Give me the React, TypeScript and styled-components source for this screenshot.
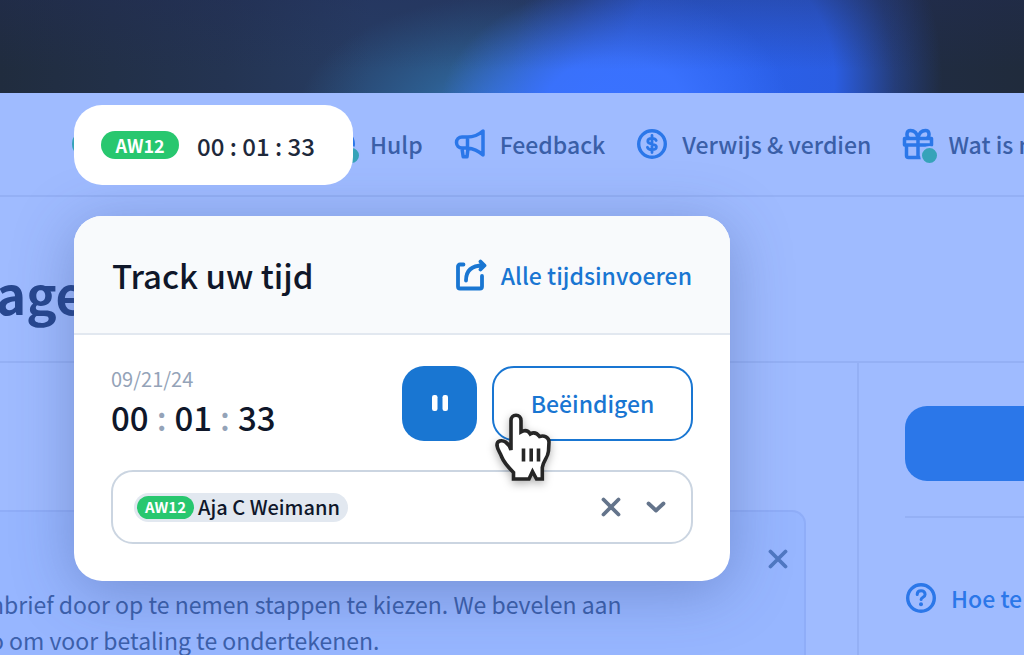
import React from "react";
import styled, { createGlobalStyle, css } from "styled-components";

const GlobalStyle = createGlobalStyle`
  *, *::before, *::after { box-sizing: border-box; }
  body {
    margin: 0;
    background: #9fbbff;
    font-family: "Noto Sans CJK SC", "Noto Sans", sans-serif;
    overflow: hidden;
  }
  h1, h2, p { margin: 0; }
  button { font: inherit; cursor: pointer; padding: 0; }
  svg { display: block; flex: none; }
`;

const line = "#94b0f5";
const accent = "#2b77e9";
const primary = "#1976d2";

const Page = styled.div`
  position: relative;
  display: flex;
  flex-direction: column;
  min-height: 100vh;
  overflow: hidden;
`;

const Banner = styled.div`
  height: 93px;
  background:
    linear-gradient(180deg, rgba(34, 44, 90, 0.32) 0%, rgba(34, 44, 90, 0) 75%),
    radial-gradient(ellipse 17% 130% at 60% 115%, #3a72ff 0%, rgba(58, 114, 255, 0.95) 40%, rgba(56, 108, 240, 0) 100%),
    radial-gradient(ellipse 21% 260% at 71% 85%, #2a60ea 0%, rgba(43, 95, 232, 0.96) 50%, rgba(42, 84, 200, 0.4) 78%, rgba(36, 60, 120, 0) 100%),
    radial-gradient(ellipse 21% 130% at 50% 125%, rgba(56, 130, 210, 0.85) 0%, rgba(50, 120, 180, 0.55) 45%, rgba(50, 110, 170, 0) 100%),
    linear-gradient(90deg, #202c3e 0%, #243452 22%, #273d64 36%, #273d64 60%, #202c42 90%, #202b3c 100%);
`;

const Nav = styled.nav`
  display: flex;
  align-items: center;
  height: 104px;
  padding-left: 72px;
  border-bottom: 2px solid ${line};
  white-space: nowrap;
`;

const NavBadge = styled.span`
  width: 78px;
  height: 28px;
  margin-right: 174px;
  border-radius: 14px;
  background: #36a3b9;
  flex: none;
`;

const NavLinks = styled.div`
  display: flex;
  gap: 31px;
`;

const NavLink = styled.a`
  display: flex;
  align-items: center;
  gap: 14px;
  color: #3a5fa8;
  font-size: 23px;
  font-weight: 500;
  line-height: 32px;
  text-decoration: none;
`;

const IconSlot = styled.span`
  position: relative;
  width: 32px;
  display: flex;
  justify-content: center;
  color: ${accent};
`;

const Dot = styled.span`
  position: absolute;
  right: -5px;
  bottom: -5px;
  width: 19px;
  height: 19px;
  border: 2px solid #9fbbff;
  border-radius: 50%;
  background: #36a3b9;
`;

const PageHeader = styled.header`
  display: flex;
  align-items: center;
  height: 166px;
  padding-top: 28px;
  border-bottom: 2px solid ${line};
`;

const PageTitle = styled.h1`
  margin-left: -4px;
  color: #27478f;
  font-size: 51px;
  font-weight: 700;
  line-height: 64px;
`;

const Columns = styled.div`
  flex: 1;
  display: flex;
`;

const Main = styled.main`
  flex: 1;
  min-width: 0;
  padding: 147px 51px 0 0;
`;

const Notice = styled.section`
  position: relative;
  height: 100%;
  padding-top: 74px;
  border: 2px solid #8fadf8;
  border-left: 0;
  border-bottom: 0;
  border-radius: 0 14px 0 0;
  background: #97b6ff;
  white-space: nowrap;
`;

const NoticeText = styled.p`
  margin-left: -10px;
  color: #3c60ab;
  font-size: 23px;
  line-height: 36px;
`;

const IconButton = styled.button<{ $color: string }>`
  display: grid;
  place-items: center;
  width: 28px;
  height: 28px;
  border: 0;
  background: none;
  color: ${(p) => p.$color};
`;

const NoticeClose = styled.div`
  position: absolute;
  top: 33px;
  right: 12px;
`;

const Aside = styled.aside`
  width: 167px;
  padding: 43px 0 0 46px;
  border-left: 2px solid ${line};
  flex: none;
  overflow: hidden;
`;

const AsideButton = styled.button`
  display: block;
  width: 100%;
  height: 75px;
  border: 0;
  border-radius: 22px 0 0 22px;
  background: ${accent};
`;

const AsideLinks = styled.div`
  margin-top: 35px;
  padding-top: 64px;
  border-top: 2px solid ${line};
`;

const AsideLink = styled(NavLink)`
  color: ${accent};
  white-space: nowrap;
`;

const Overlay = styled.div`
  position: absolute;
  top: 105px;
  left: 74px;
  width: 656px;
`;

const card = css`
  background: #fff;
  box-shadow: 0 10px 60px rgba(50, 70, 130, 0.35);
`;

const TimerPill = styled.button`
  position: relative;
  display: flex;
  align-items: center;
  gap: 18px;
  width: 279px;
  height: 80px;
  padding-left: 27px;
  border: 0;
  border-radius: 28px;
  background: #fff;
  color: #1e293b;
  font-size: 24px;
  font-weight: 500;
  white-space: pre;
`;

const Badge = styled.span<{ $small?: boolean }>`
  display: grid;
  place-items: center;
  width: ${(p) => (p.$small ? 57 : 78)}px;
  height: ${(p) => (p.$small ? 23 : 28)}px;
  border-radius: 14px;
  background: #28c76f;
  color: #fff;
  font-size: ${(p) => (p.$small ? 15 : 18)}px;
  font-weight: 700;
  line-height: 20px;
`;

const Popover = styled.section`
  ${card}
  margin-top: 31px;
  border-radius: 28px;
`;

const PopoverHeader = styled.header`
  display: flex;
  align-items: center;
  justify-content: space-between;
  height: 119px;
  padding: 0 38px;
  border-bottom: 2px solid #e2e8f0;
  border-radius: 28px 28px 0 0;
  background: #f8fafc;
`;

const PopoverTitle = styled.h2`
  color: #0f172a;
  font-size: 33px;
  font-weight: 500;
  line-height: 48px;
`;

const EntriesLink = styled(NavLink)`
  color: ${primary};
`;

const PopoverBody = styled.div`
  padding: 30px 37px 37px;
`;

const TimerRow = styled.div`
  display: flex;
  align-items: center;
  gap: 15px;
`;

const TimerInfo = styled.div`
  flex: 1;
`;

const DateText = styled.div`
  color: #94a3b8;
  font-size: 20px;
  line-height: 28px;
`;

const Elapsed = styled.div`
  display: flex;
  gap: 8px;
  color: #0f172a;
  font-size: 33px;
  font-weight: 500;
  line-height: 48px;
`;

const Colon = styled.span`
  color: #94a3b8;
`;

const PauseButton = styled.button`
  display: grid;
  place-items: center;
  width: 75px;
  height: 75px;
  border: 0;
  border-radius: 22px;
  background: ${primary};
`;

const StopButton = styled.button`
  width: 201px;
  height: 75px;
  border: 2px solid ${primary};
  border-radius: 22px;
  background: #fff;
  color: ${primary};
  font-size: 23px;
  font-weight: 500;
`;

const ContactField = styled.div`
  display: flex;
  align-items: center;
  gap: 17px;
  height: 74px;
  margin-top: 29px;
  padding: 0 21px;
  border: 2px solid #cbd5e1;
  border-radius: 22px;
`;

const Chip = styled.span`
  display: flex;
  align-items: center;
  gap: 4px;
  height: 29px;
  margin-right: auto;
  padding: 0 8px 0 3px;
  border-radius: 15px;
  background: #e2e8f0;
  color: #0f172a;
  font-size: 20px;
  font-weight: 500;
  line-height: 28px;
`;

const Cursor = styled.svg`
  position: absolute;
  top: 305px;
  left: 413px;
  filter: drop-shadow(0 3px 4px rgba(0, 0, 0, 0.3));
`;

const stroke = {
  fill: "none",
  stroke: "currentColor",
  strokeLinecap: "round" as const,
  strokeLinejoin: "round" as const,
};

const Megaphone = () => (
  <svg width="32" height="32" viewBox="0 0 32 32" {...stroke} strokeWidth="3.500">
    <path d="M14 9H8a5.500 5.500 0 0 0 0 11h6M13.500 9c6 0 11-2 15.500-6v24c-4.500-4-9.500-6.500-15.500-7zM8 20.500l1.200 8.300h3.800l1-8.300" />
  </svg>
);

const Dollar = () => (
  <svg width="32" height="32" viewBox="0 0 32 32" {...stroke} strokeWidth="3.400">
    <circle cx="16" cy="16" r="13.300" />
    <path d="M16 7.500v17M20.200 12.500c-.6-1.500-2.200-2.100-4.200-2.100-2.500 0-4.200 1-4.200 2.800 0 4 8.600 1.700 8.600 5.600 0 1.800-1.700 2.900-4.400 2.900-2.300 0-4-.8-4.600-2.500" strokeWidth="2.800" />
  </svg>
);

const Gift = () => (
  <svg width="32" height="32" viewBox="0 0 32 32" {...stroke} strokeWidth="3.500">
    <path d="M2.500 10.500h27v6.500h-27zM4.500 17v10.500a2 2 0 0 0 2 2h19M16 10.500v19M16 10C15 5 12 2.500 8.500 2.500c-4 0-4.500 5-2 7.500M16 10c1-5 4-7.500 7.500-7.500 4 0 4.500 5 2 7.500" />
  </svg>
);

const Question = () => (
  <svg width="32" height="32" viewBox="0 0 32 32" {...stroke} strokeWidth="3.400">
    <circle cx="16" cy="16" r="13.300" />
    <path d="M12.200 12.500c0-2.300 1.600-3.800 3.900-3.800s4 1.500 4 3.700c0 2.800-4 2.800-4 5.200" strokeWidth="3" />
    <circle cx="16" cy="22.300" r="2" fill="currentColor" stroke="none" />
  </svg>
);

const Share = () => (
  <svg width="32" height="32" viewBox="0 0 32 32" {...stroke} strokeWidth="3.800">
    <path d="M8.500 5.500H5a2 2 0 0 0-2 2v20a2 2 0 0 0 2 2h20a2 2 0 0 0 2-2V17" />
    <path d="M11 21.500C11 12.500 16 6.500 28 6.500M25.500 2.500l4 4-4 4" />
    <path d="M25.500 3v7l4-3.500z" fill="currentColor" strokeWidth="2" />
  </svg>
);

const Cross = () => (
  <svg width="20" height="20" viewBox="0 0 20 20" {...stroke} strokeWidth="3.800">
    <path d="M2.500 2.500l15 15M17.500 2.500l-15 15" />
  </svg>
);

const Chevron = () => (
  <svg width="20" height="20" viewBox="0 0 20 20" {...stroke} strokeWidth="3.800">
    <path d="M2.500 6.500l7.500 7 7.500-7" />
  </svg>
);

export default function App() {
  return (
    <>
      <GlobalStyle />
      <Page>
        <Banner />
        <Nav>
          <NavBadge />
          <NavLinks>
            <NavLink href="#hulp">
              <IconSlot>
                <Question />
                <Dot />
              </IconSlot>
              Hulp
            </NavLink>
            <NavLink href="#feedback">
              <IconSlot>
                <Megaphone />
              </IconSlot>
              Feedback
            </NavLink>
            <NavLink href="#verwijs">
              <IconSlot>
                <Dollar />
              </IconSlot>
              Verwijs &amp; verdien
            </NavLink>
            <NavLink href="#nieuw">
              <IconSlot>
                <Gift />
                <Dot />
              </IconSlot>
              Wat is nieuw
            </NavLink>
          </NavLinks>
        </Nav>
        <PageHeader>
          <PageTitle>age</PageTitle>
        </PageHeader>
        <Columns>
          <Main>
            <Notice>
              <NoticeClose>
                <IconButton $color="#5078c2" aria-label="Melding sluiten">
                  <Cross />
                </IconButton>
              </NoticeClose>
              <NoticeText>
                nbrief door op te nemen stappen te kiezen. We bevelen aan
                <br />o om voor betaling te ondertekenen.
              </NoticeText>
            </Notice>
          </Main>
          <Aside>
            <AsideButton aria-label="Toevoegen" />
            <AsideLinks>
              <AsideLink href="#hoe">
                <IconSlot>
                  <Question />
                </IconSlot>
                Hoe te
              </AsideLink>
            </AsideLinks>
          </Aside>
        </Columns>

        <Overlay>
          <TimerPill>
            <Badge>AW12</Badge>
            00 : 01 : 33
          </TimerPill>
          <Popover>
            <PopoverHeader>
              <PopoverTitle>Track uw tijd</PopoverTitle>
              <EntriesLink href="#tijd">
                <Share />
                Alle tijdsinvoeren
              </EntriesLink>
            </PopoverHeader>
            <PopoverBody>
              <TimerRow>
                <TimerInfo>
                  <DateText>09/21/24</DateText>
                  <Elapsed>
                    00<Colon>:</Colon>01<Colon>:</Colon>33
                  </Elapsed>
                </TimerInfo>
                <PauseButton aria-label="Pauzeren">
                  <svg width="18" height="18" viewBox="0 0 18 18" fill="#fff">
                    <rect x="1" y="1" width="5.500" height="16" rx="2.200" />
                    <rect x="11.500" y="1" width="5.500" height="16" rx="2.200" />
                  </svg>
                </PauseButton>
                <StopButton>Beëindigen</StopButton>
              </TimerRow>
              <ContactField>
                <Chip>
                  <Badge $small>AW12</Badge>
                  Aja C Weimann
                </Chip>
                <IconButton $color="#64748b" aria-label="Wissen">
                  <Cross />
                </IconButton>
                <IconButton $color="#64748b" aria-label="Openen">
                  <Chevron />
                </IconButton>
              </ContactField>
            </PopoverBody>
          </Popover>
          <Cursor width="72" height="76" viewBox="0 0 72 76" fill="#fff" stroke="#262626" strokeWidth="3.600" strokeLinejoin="miter">
            <path d="M24 40V10.500c0-3.200 2-5.200 5-5.200s5 2 5 5.200V22c3.500-2 7-1.500 9.300 2 3.200-1.800 6.600-1 9.200 2.500 4.500-1.500 9.500.5 9.500 5.500l-.5 9c-.5 7-5.500 10-6.200 16.500V69h-5.800l-4-7.500-3.500 7.500H26.500v-6.500C21 57 17 53 14.500 46.500 13 42 10.500 40 10 35.500c-.3-5 5-5.800 8.500-3.500 3 2.200 4.500 4.500 5.500 8z" />
            <path d="M36.500 38.500v13M44.200 38.500v13M51.500 38.500v13" strokeWidth="3.600" />
          </Cursor>
        </Overlay>
      </Page>
    </>
  );
}
